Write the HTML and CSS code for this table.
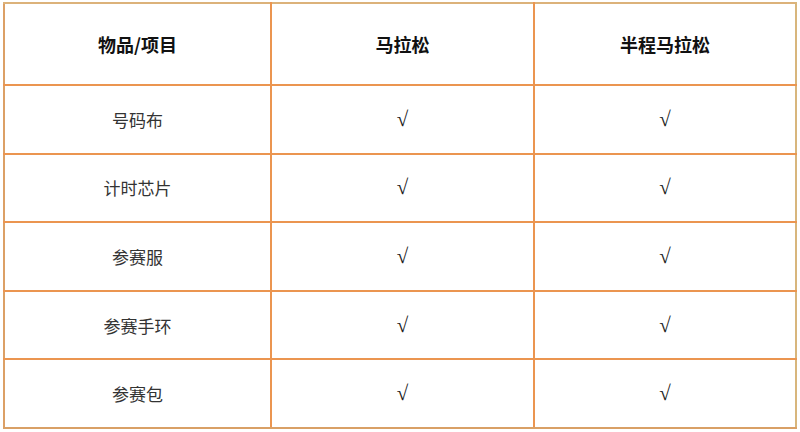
FILE: index.html
```html
<!DOCTYPE html>
<html lang="zh">
<head>
<meta charset="utf-8">
<link rel="stylesheet" href="styles.css">
</head>
<body>
<div class="wrap">
<table class="grid">
  <colgroup><col class="c1"><col class="c2"><col class="c3"></colgroup>
  <thead>
    <tr><th>物品/项目</th><th>马拉松</th><th>半程马拉松</th></tr>
  </thead>
  <tbody>
    <tr><td>号码布</td><td class="ck">√</td><td class="ck">√</td></tr>
    <tr><td>计时芯片</td><td class="ck">√</td><td class="ck">√</td></tr>
    <tr><td>参赛服</td><td class="ck">√</td><td class="ck">√</td></tr>
    <tr><td>参赛手环</td><td class="ck">√</td><td class="ck">√</td></tr>
    <tr><td>参赛包</td><td class="ck">√</td><td class="ck">√</td></tr>
  </tbody>
</table>
</div>
</body>
</html>
```
FILE: styles.css
```css
html, body { margin: 0; padding: 0; background: #fff; }
.wrap { padding: 2px 3px 0 3px; }
.grid {
  width: 792px;
  border-collapse: collapse;
  font-family: "Noto Sans CJK SC", "Noto Sans", sans-serif;
  color: #222;
  table-layout: fixed;
}
.c1 { width: 267px; }
.c2 { width: 263px; }
.c3 { width: 262px; }
.grid th, .grid td {
  border: 2px solid #eb9550;
  text-align: center;
  padding: 0;
}
.grid th { border-top-color: #dcb27a; }
.grid tr > :first-child { border-left-color: #dca066; }
.grid tr > :last-child { border-right-color: #d8b67c; }
.grid tbody tr:last-child td { border-bottom-color: #d9a066; }
.grid th {
  height: 80px;
  font-size: 18px;
  font-weight: 700;
  color: #111;
}
.grid td {
  height: 66.6px;
  font-size: 17px;
  color: #333;
}
.grid td.ck {
  font-family: "Liberation Serif", "DejaVu Serif", serif;
  font-size: 21px;
  color: #222;
}
```
